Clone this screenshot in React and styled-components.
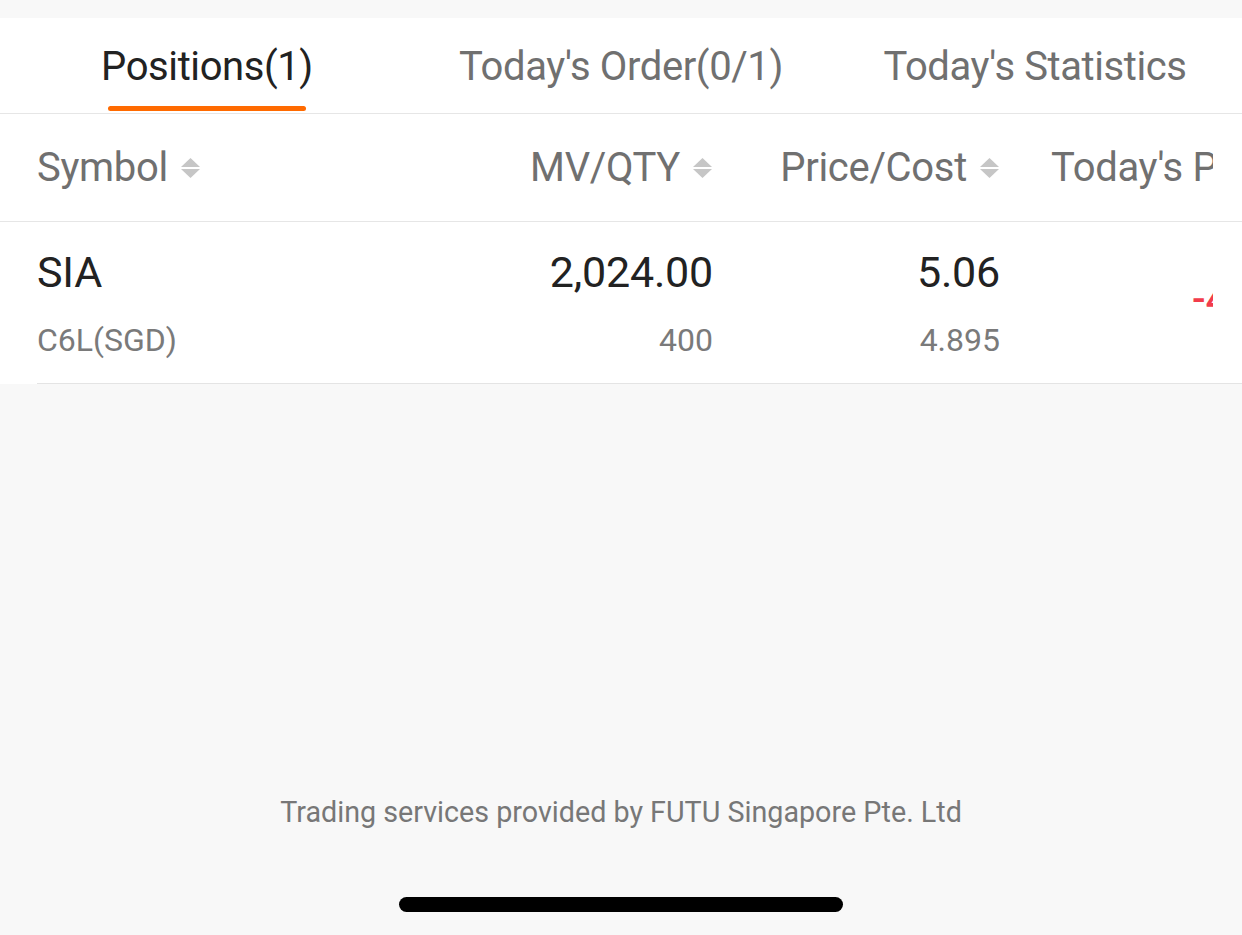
import styled, { createGlobalStyle } from "styled-components";

const GlobalStyle = createGlobalStyle`
  html, body {
    margin: 0;
    padding: 0;
    background: #f8f8f8;
    font-family: Roboto, "Liberation Sans", sans-serif;
  }
`;

const Screen = styled.div`
  width: 1242px;
  height: 935px;
  display: flex;
  flex-direction: column;
  background: #f8f8f8;
  overflow: hidden;
`;

const TopGap = styled.div`
  height: 18px;
  flex: none;
`;

const Panel = styled.div`
  background: #fff;
`;

const Tabs = styled.div`
  display: flex;
  height: 96px;
  border-bottom: 1px solid #e6e6e6;
  box-sizing: border-box;
`;

const Tab = styled.div`
  position: relative;
  width: ${(p) => p.w}px;
  display: flex;
  justify-content: center;
  padding-top: 25px;
  box-sizing: border-box;
  font-size: 40px;
  letter-spacing: -0.4px;
  color: ${(p) => (p.active ? "#222" : "#707070")};

  &::after {
    content: "";
    display: ${(p) => (p.active ? "block" : "none")};
    position: absolute;
    left: 50%;
    transform: translateX(-50%);
    bottom: 2px;
    width: 198px;
    height: 5px;
    border-radius: 3px;
    background: #ff6a00;
  }
`;

const Row = styled.div`
  display: flex;
  height: ${(p) => p.h}px;
  align-items: ${(p) => (p.top ? "flex-start" : "center")};
  padding-left: 37px;
  padding-top: ${(p) => p.pt || 0}px;
  box-sizing: border-box;
  border-bottom: ${(p) => (p.inset ? "none" : "1px solid #e6e6e6")};
`;

const RowLine = styled.div`
  margin-left: 37px;
  border-bottom: 1px solid #e4e4e4;
`;

const Cell = styled.div`
  width: ${(p) => p.w}px;
  flex: none;
  display: flex;
  flex-direction: column;
  align-items: ${(p) => (p.right ? "flex-end" : "flex-start")};
`;

const ClipCell = styled.div`
  width: 213px;
  flex: none;
  overflow: hidden;
  white-space: nowrap;
  padding-left: ${(p) => p.pl}px;
  padding-top: ${(p) => p.pt || 0}px;
  box-sizing: border-box;
`;

const HeadText = styled.div`
  display: flex;
  align-items: center;
  gap: 12px;
  font-size: 40px;
  letter-spacing: -0.3px;
  color: #707070;
  white-space: nowrap;
`;

const Main = styled.div`
  font-size: 43px;
  color: #222;
  line-height: 1;
  letter-spacing: -0.2px;
`;

const Sub = styled.div`
  font-size: 32px;
  color: #7a7a7a;
  line-height: 1;
  margin-top: 30px;
`;

const Loss = styled.div`
  font-size: 40px;
  color: #f23c4c;
  font-weight: 500;
`;

const Spacer = styled.div`
  flex: 1;
`;

const Footer = styled.div`
  text-align: center;
  font-size: 28.7px;
  color: #777;
  margin-bottom: 68px;
`;

const HomeBar = styled.div`
  align-self: center;
  width: 444px;
  height: 15px;
  border-radius: 8px;
  background: #000;
  margin-bottom: 23px;
`;

function SortIcon() {
  return (
    <svg width="21" height="22" viewBox="0 0 21 22">
      <path d="M10.5 1 L20 10 L1 10 Z" fill="#c6c6c6" />
      <path d="M1 12 L20 12 L10.5 21 Z" fill="#c6c6c6" />
    </svg>
  );
}

export default function App() {
  return (
    <Screen>
      <GlobalStyle />
      <TopGap />
      <Panel>
        <Tabs>
          <Tab w={414} active>
            Positions(1)
          </Tab>
          <Tab w={414}>Today's Order(0/1)</Tab>
          <Tab w={414}>Today's Statistics</Tab>
        </Tabs>
        <Row h={108}>
          <Cell w={300}>
            <HeadText>
              Symbol <SortIcon />
            </HeadText>
          </Cell>
          <Cell w={376} right>
            <HeadText>
              MV/QTY <SortIcon />
            </HeadText>
          </Cell>
          <Cell w={287} right>
            <HeadText>
              Price/Cost <SortIcon />
            </HeadText>
          </Cell>
          <ClipCell pl={51}>
            <HeadText>Today's P/L</HeadText>
          </ClipCell>
        </Row>
        <Row h={161} top inset pt={29}>
          <Cell w={300}>
            <Main>SIA</Main>
            <Sub>C6L(SGD)</Sub>
          </Cell>
          <Cell w={376} right>
            <Main>2,024.00</Main>
            <Sub>400</Sub>
          </Cell>
          <Cell w={287} right>
            <Main>5.06</Main>
            <Sub>4.895</Sub>
          </Cell>
          <ClipCell pl={192} pt={25}>
            <Loss>-44.00</Loss>
          </ClipCell>
        </Row>
        <RowLine />
      </Panel>
      <Spacer />
      <Footer>Trading services provided by FUTU Singapore Pte. Ltd</Footer>
      <HomeBar />
    </Screen>
  );
}
